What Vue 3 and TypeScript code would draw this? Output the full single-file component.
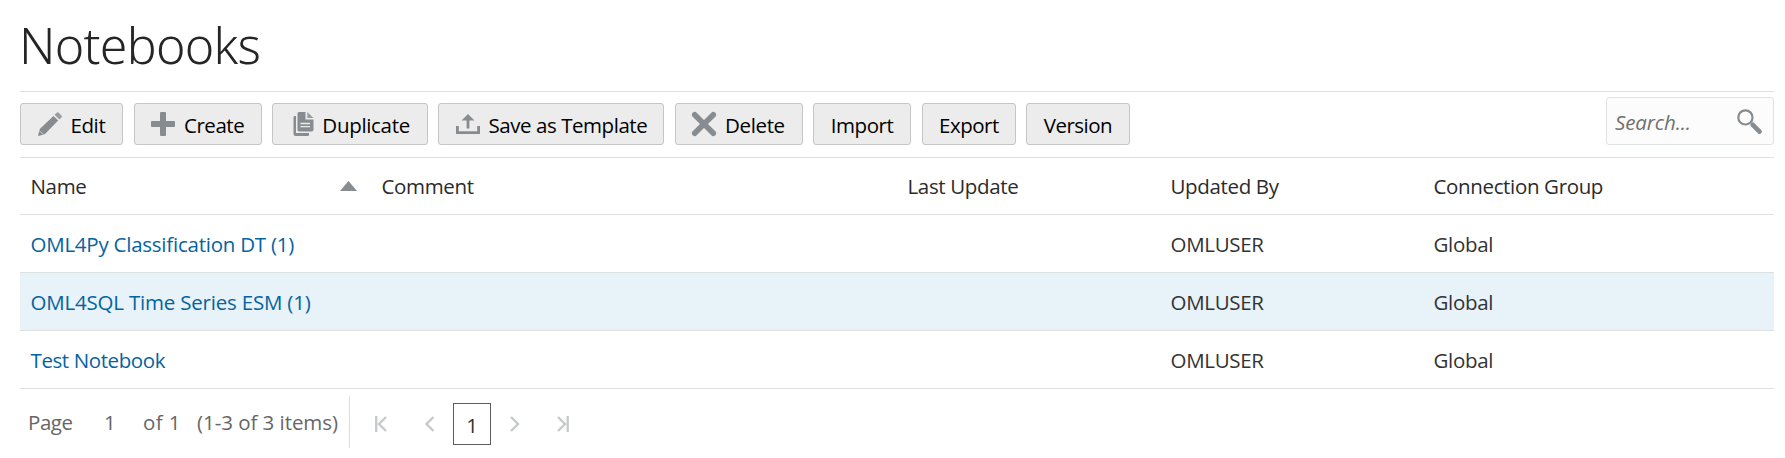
<script setup lang="ts">
import { ref } from 'vue'

interface Action { label: string; icon?: string; width: number; spacing: number }
interface Notebook { name: string; comment: string; lastUpdate: string; updatedBy: string; group: string; spacing: number }

const actions: Action[] = [
  { label: 'Edit', icon: 'edit', width: 103.2, spacing: -0.37 },
  { label: 'Create', icon: 'create', width: 128, spacing: -0.45 },
  { label: 'Duplicate', icon: 'duplicate', width: 155.8, spacing: -0.32 },
  { label: 'Save as Template', icon: 'template', width: 226, spacing: -0.45 },
  { label: 'Delete', icon: 'delete', width: 128.2, spacing: -0.34 },
  { label: 'Import', width: 98, spacing: -0.42 },
  { label: 'Export', width: 94.2, spacing: -0.5 },
  { label: 'Version', width: 103.8, spacing: -0.52 },
]

const notebooks: Notebook[] = [
  { name: 'OML4Py Classification DT (1)', comment: '', lastUpdate: '', updatedBy: 'OMLUSER', group: 'Global', spacing: -0.24 },
  { name: 'OML4SQL Time Series ESM (1)', comment: '', lastUpdate: '', updatedBy: 'OMLUSER', group: 'Global', spacing: -0.2 },
  { name: 'Test Notebook', comment: '', lastUpdate: '', updatedBy: 'OMLUSER', group: 'Global', spacing: -0.4 },
]
const selected = ref(1)
</script>

<template>
  <main class="page">
    <h1 class="title">Notebooks</h1>

    <div class="toolbar">
      <div class="actions">
        <button v-for="a in actions" :key="a.label" class="btn" :style="{ width: a.width + 'px' }">
          <svg v-if="a.icon" class="icon" viewBox="0 0 24 24">
            <g v-if="a.icon === 'edit'">
              <path d="M2 16.800 15.500 3.900l4.700 4.700L7 22 .6 24Q0 24 .1 23.300z" />
              <path class="tip" d="M16.600 2.800 18.700.8Q19.700-.2 20.800.8l2.600 2.600q1.100 1.100.1 2.100l-2.100 2z" />
              <path class="hole" d="M1.500 19l4 3.300" />
            </g>
            <path v-else-if="a.icon === 'create'" d="M10 0h4q1 0 1 1v8h8q1 0 1 1v4q0 1-1 1h-8v8q0 1-1 1h-4q-1 0-1-1v-8H1q-1 0-1-1v-4q0-1 1-1h8V1q0-1 1-1z" />
            <g v-else-if="a.icon === 'duplicate'" transform="translate(2.500)">
              <path d="M2.200 4H3.500v17h13v1.700q0 1.300-1.300 1.300H3.200Q1 24 1 21.800V5.200Q1 4 2.200 4z" />
              <path d="M6.500 0H13v7.500h8v10.300q0 1.700-1.700 1.700H6.700Q5 19.500 5 17.800V1.500Q5 0 6.500 0z" />
              <path class="tip" d="M14.800 0 21 6h-6.200z" />
              <path class="line" d="M8 11.500h9.500M8 14.700h9.500" />
            </g>
            <g v-else-if="a.icon === 'template'">
              <path d="M0 14h2.800v5.200h18.400V14H24v8H0z" />
              <path d="M12 2 18.500 8.500H13.400v8h-2.800v-8H5.500z" />
            </g>
            <path v-else class="cross" d="M2.700 2.700 21.300 21.300M21.300 2.700 2.700 21.300" />
          </svg>
          <span class="label" :style="{ letterSpacing: a.spacing + 'px' }">{{ a.label }}</span>
        </button>
      </div>
      <div class="search">
        <span class="placeholder">Search...</span>
        <svg class="glass" viewBox="0 0 25 25">
          <circle cx="8.400" cy="8.400" r="7.100" />
          <path d="M15.800 15.800 22.500 22.600" />
        </svg>
      </div>
    </div>

    <div class="row head">
      <span class="cell">Name<svg class="sort" viewBox="0 0 17 10"><path d="M8.500 0 17 10H0z" /></svg></span>
      <span class="cell">Comment</span>
      <span class="cell">Last Update</span>
      <span class="cell">Updated By</span>
      <span class="cell">Connection Group</span>
    </div>
    <div
      v-for="(n, i) in notebooks"
      :key="n.name"
      class="row"
      :class="{ selected: i === selected }"
      @click="selected = i"
    >
      <span class="cell"><a class="link" :style="{ letterSpacing: n.spacing + 'px' }">{{ n.name }}</a></span>
      <span class="cell">{{ n.comment }}</span>
      <span class="cell">{{ n.lastUpdate }}</span>
      <span class="cell">{{ n.updatedBy }}</span>
      <span class="cell">{{ n.group }}</span>
    </div>

    <div class="pager">
      <div class="summary">
        <span class="word">Page</span>
        <span class="number">1</span>
        <span class="total">of 1</span>
        <span>(1-3 of 3 items)</span>
      </div>
      <nav class="nav">
        <svg class="arrow first" viewBox="0 0 12 16"><path d="M1.200 0v16M11 1 4 8l7 7" /></svg>
        <svg class="arrow prev" viewBox="0 0 10 16"><path d="M8.500 1 1.500 8l7 7" /></svg>
        <span class="current">1</span>
        <svg class="arrow next" viewBox="0 0 10 16"><path d="M1 1l7 7-7 7" /></svg>
        <svg class="arrow last" viewBox="0 0 12 16"><path d="M10.700 0v16M1 1l7 7-7 7" /></svg>
      </nav>
    </div>
  </main>
</template>

<style>
body { background: #fff; }
</style>

<style scoped>
.page {
  box-sizing: border-box;
  width: 1785px;
  height: 458px;
  padding: 0 11px 0 20px;
  overflow: hidden;
  font-family: "Open Sans", "Noto Sans", sans-serif;
  font-size: 20.5px;
  color: #2b2b2b;
}
.title {
  box-sizing: border-box;
  height: 91px;
  margin: 0;
  padding-top: 9px;
  font: 300 50px/72px "Noto Sans", "Open Sans", sans-serif;
  letter-spacing: -0.7px;
  text-indent: -1px;
  color: #252525;
}
.toolbar {
  box-sizing: border-box;
  display: flex;
  justify-content: space-between;
  height: 67px;
  border-top: 1px solid #dfe0e1;
  border-bottom: 1px solid #dfe0e1;
}
.actions { display: flex; gap: 10.4px; padding-top: 11px; }
.btn {
  box-sizing: border-box;
  display: flex;
  align-items: center;
  gap: 8.8px;
  height: 42px;
  padding: 0 0 0 16.6px;
  border: 1px solid #c4c6c8;
  border-radius: 3px;
  background: #ececec;
  font: inherit;
  color: #000;
  white-space: nowrap;
}
.icon { flex: none; width: 24px; height: 24px; fill: #868c90; overflow: visible; }
.tip { fill: #9a9ea1; }
.hole { fill: none; stroke: #c4c6c8; stroke-width: 1; }
.line { fill: none; stroke: #ececec; stroke-width: 1.3; }
.cross { fill: none; stroke: #868c90; stroke-width: 5.6; stroke-linecap: round; }
.label { padding-top: 2px; line-height: 28px; }
.search {
  box-sizing: border-box;
  display: flex;
  justify-content: space-between;
  width: 168px;
  height: 48px;
  margin-top: 5px;
  padding: 0 11px 0 8px;
  border: 1px solid #e0e3e4;
  border-radius: 3px;
  background: #fcfcfc;
}
.placeholder { font-style: italic; line-height: 48px; letter-spacing: -0.1px; color: #707070; }
.glass { width: 25px; height: 25px; margin-top: 11px; fill: none; stroke: #868c90; stroke-width: 2.2; }
.glass path { stroke-width: 4.6; stroke-linecap: round; }
.row {
  box-sizing: border-box;
  display: grid;
  grid-template-columns: 351px 526px 263px 263px 351px;
  height: 58px;
  border-bottom: 1px solid #dfe0e1;
  line-height: 57px;
  letter-spacing: -0.3px;
  color: #333;
}
.row.head { height: 57px; line-height: 56px; letter-spacing: -0.35px; color: #2b2b2b; }
.row.selected { background: #e7f2f9; }
.cell { display: flex; align-items: center; padding: 1px 14px 0 10.5px; }
.row.head .cell { padding-top: 0; }
.sort { width: 17px; height: 10px; margin-left: auto; margin-top: -1px; fill: #868c90; }
.link { color: #0464a0; }
.pager { display: flex; color: #666; letter-spacing: -0.05px; }
.summary {
  box-sizing: border-box;
  display: flex;
  width: 330px;
  height: 52px;
  margin-top: 7px;
  padding-left: 8px;
  border-right: 1px solid #dcdcdc;
  line-height: 53px;
  white-space: nowrap;
}
.word { width: 76px; letter-spacing: -0.45px; }
.number { width: 39px; }
.total { width: 54px; letter-spacing: 0.4px; }
.nav { display: flex; align-items: center; height: 42px; margin-top: 14px; padding-left: 25px; }
.arrow { height: 16px; fill: none; stroke: #c6c9cb; stroke-width: 2.3; }
.first, .last { width: 12px; }
.prev, .next { width: 10px; }
.prev { margin: 0 18px 0 38px; }
.next { margin: 0 37px 0 19px; }
.current {
  box-sizing: border-box;
  width: 38px;
  height: 42px;
  padding-top: 1px;
  border: 1px solid #5c5c5c;
  line-height: 40px;
  text-align: center;
  color: #333;
}
</style>
